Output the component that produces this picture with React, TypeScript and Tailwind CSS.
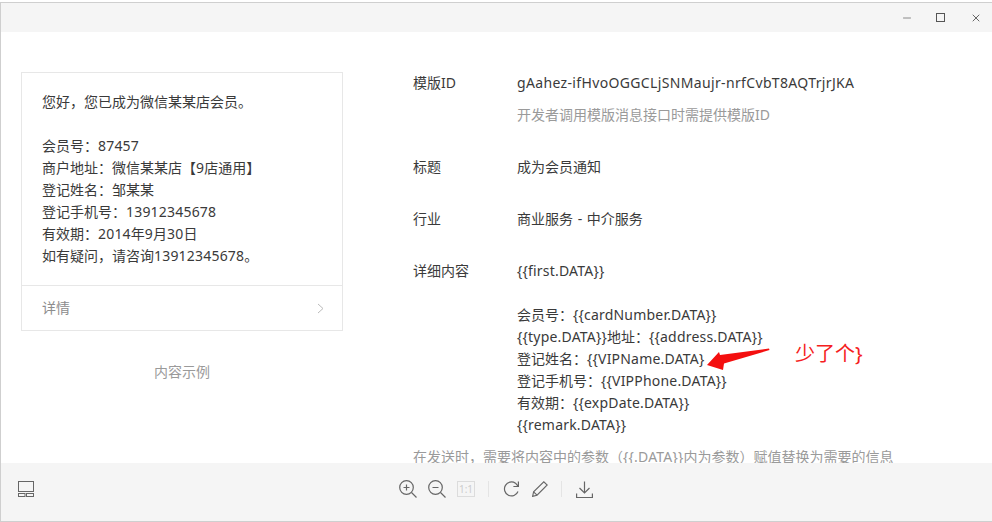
import { Fragment } from "react";
import { Minus, X } from "lucide-react";

const cardLines = [
    "会员号：87457",
    "商户地址：微信某某店【9店通用】",
    "登记姓名：邹某某",
    "登记手机号：13912345678",
    "有效期：2014年9月30日",
    "如有疑问，请咨询13912345678。",
];

const detailLines = [
    "会员号：{{cardNumber.DATA}}",
    "{{type.DATA}}地址：{{address.DATA}}",
    "登记姓名：{{VIPName.DATA}",
    "登记手机号：{{VIPPhone.DATA}}",
    "有效期：{{expDate.DATA}}",
    "{{remark.DATA}}",
];

// latin runs are a bit wider in the reference font, CJK runs are not
function Mixed({ text }: { text: string }) {
    const parts = text.split(/([\x20-\x7e]+)/).filter(Boolean);
    return (
        <>
            {parts.map((part, i) =>
                /^[\x20-\x7e]+$/.test(part) ? (
                    <span key={i} className="tracking-[0.2px]">{part}</span>
                ) : (
                    <Fragment key={i}>{part}</Fragment>
                ),
            )}
        </>
    );
}

function ToolbarIcons() {
    return (
        <div className="ml-[365px] flex items-center text-[#666]">
            {/* zoom in */}
            <svg width="18" height="18" viewBox="0 0 18 18" fill="none" stroke="currentColor" strokeWidth="1.2">
                <circle cx="7.5" cy="7.5" r="6.8" />
                <path d="M12.5 12.5l5 5M4.5 7.5h6M7.5 4.5v6" />
            </svg>
            {/* zoom out */}
            <svg className="ml-[11px]" width="18" height="18" viewBox="0 0 18 18" fill="none" stroke="currentColor" strokeWidth="1.2">
                <circle cx="7.5" cy="7.5" r="6.8" />
                <path d="M12.5 12.5l5 5M4.5 7.5h6" />
            </svg>
            <div className="ml-[11px] flex h-[16px] w-[18px] items-center justify-center border border-[#dcdcdc] text-[10px] leading-none text-[#ccc]">
                1:1
            </div>
            <div className="ml-[13px] h-[16px] w-px bg-[#e4e4e4]" />
            {/* rotate */}
            <svg className="ml-[14px]" width="16" height="16" viewBox="0 0 16 16" fill="none" stroke="currentColor" strokeWidth="1.2">
                <path d="M15 10.5A7 7 0 1 1 12.5 2.2L15 5" />
                <path d="M15.4 .5v5h-5" />
            </svg>
            {/* pencil */}
            <svg className="ml-[13px]" width="16" height="16" viewBox="0 0 16 16" fill="none" stroke="currentColor" strokeWidth="1.1">
                <path d="M.6 15.4l1-4.6L11.8.8l3.4 3.2L5 14.2z" />
                <path d="M1.6 10.8l3.4 3.4" />
            </svg>
            <div className="ml-[13px] h-[16px] w-px bg-[#e4e4e4]" />
            {/* download */}
            <svg className="ml-[14px]" width="17" height="17" viewBox="0 0 17 17" fill="none" stroke="currentColor" strokeWidth="1.2">
                <path d="M8.5 .5v11M3.5 7l5 5 5-5M.6 12.5v4h15.8v-4" />
            </svg>
        </div>
    );
}

export default function App() {
    return (
        <div
            className="relative h-[522px] w-[992px] overflow-hidden bg-white pt-[2px] text-[14px] leading-[22px] text-[#3a3a3a]"
            style={{ fontFamily: '"Noto Sans", "Noto Sans CJK SC", sans-serif' }}
        >
            <div className="flex h-full flex-col border-t border-b border-l border-[#cfcfcf] bg-white">
                {/* title bar */}
                <div className="flex h-[29px] shrink-0 items-center justify-end bg-[#f5f5f5] text-[#666]">
                    <Minus size={12} strokeWidth={1.5} className="mr-[23px]" />
                    <div className="mr-[25px] h-[9px] w-[9px] border border-[#555]" />
                    <X size={12} strokeWidth={2} className="mr-[10px]" />
                </div>

                <div className="flex min-h-0 flex-1 overflow-hidden">
                    {/* preview */}
                    <div className="w-[412px] shrink-0 pl-[20px] pt-[40px]">
                        <div className="w-[322px] border border-[#e7e7e7]">
                            <div className="px-5 pt-[18px] pb-[18px]">
                                <p>您好，您已成为微信某某店会员。</p>
                                <p>&nbsp;</p>
                                {cardLines.map((line) => (
                                    <p key={line}><Mixed text={line} /></p>
                                ))}
                            </div>
                            <div className="flex h-[45px] items-center justify-between border-t border-[#e7e7e7] pl-5 pr-[18px] text-[#8d8d8d]">
                                <span>详情</span>
                                <svg width="7" height="11" viewBox="0 0 7 11" fill="none" stroke="#bbb" strokeWidth="1">
                                    <path d="M1 1l5 4.5L1 10" />
                                </svg>
                            </div>
                        </div>
                        <p className="mt-[30px] w-[322px] text-center text-[#9a9a9a]">内容示例</p>
                    </div>

                    {/* template info */}
                    <div className="flex-1 pt-[40px]">
                        <div className="flex">
                            <span className="w-[104px]">模版ID</span>
                            <div>
                                <p className="tracking-[0.35px]">gAahez-ifHvoOGGCLjSNMaujr-nrfCvbT8AQTrjrJKA</p>
                                <p className="mt-[10px] text-[#9a9a9a]">开发者调用模版消息接口时需提供模版ID</p>
                            </div>
                        </div>
                        <div className="mt-[30px] flex">
                            <span className="w-[104px]">标题</span>
                            <span>成为会员通知</span>
                        </div>
                        <div className="mt-[30px] flex">
                            <span className="w-[104px]">行业</span>
                            <span>商业服务 <span className="mx-px">-</span> 中介服务</span>
                        </div>
                        <div className="mt-[30px] flex">
                            <span className="w-[104px]">详细内容</span>
                            <div>
                                <p><Mixed text="{{first.DATA}}" /></p>
                                <p className="mt-[22px]"><Mixed text={detailLines[0]} /></p>
                                {detailLines.slice(1).map((line) => (
                                    <p key={line}><Mixed text={line} /></p>
                                ))}
                            </div>
                        </div>
                        <p className="mt-[10px] whitespace-nowrap text-[#9a9a9a]">
                            <Mixed text={"在发送时，需要将内容中的参数（{{.DATA}}内为参数）赋值替换为需要的信息"} />
                        </p>
                    </div>
                </div>

                {/* bottom toolbar */}
                <div className="flex h-[58px] shrink-0 items-start bg-[#f5f5f5] pt-[17px] pl-[17px]">
                    <svg className="mt-px" width="16" height="16" viewBox="0 0 16 16" fill="none" stroke="#666" strokeWidth="1">
                        <rect x="0.5" y="0.5" width="15" height="10" />
                        <rect x="0.5" y="12.5" width="6.5" height="3" />
                        <rect x="8.5" y="12.5" width="7" height="3" />
                    </svg>
                    <ToolbarIcons />
                </div>
            </div>

            {/* red annotation on top of the screenshot */}
            <svg className="absolute left-[706px] top-[347px]" width="64" height="26" viewBox="0 0 64 26">
                <path d="M1 18L13 5l1 3L63 1.5l.5 1.5L18 16.5l-1 6.5z" fill="#f40f0f" />
            </svg>
            <span className="absolute left-[795px] top-[341px] text-[20px] leading-[26px] text-[#f52020]">少了个{"}"}</span>
        </div>
    );
}
